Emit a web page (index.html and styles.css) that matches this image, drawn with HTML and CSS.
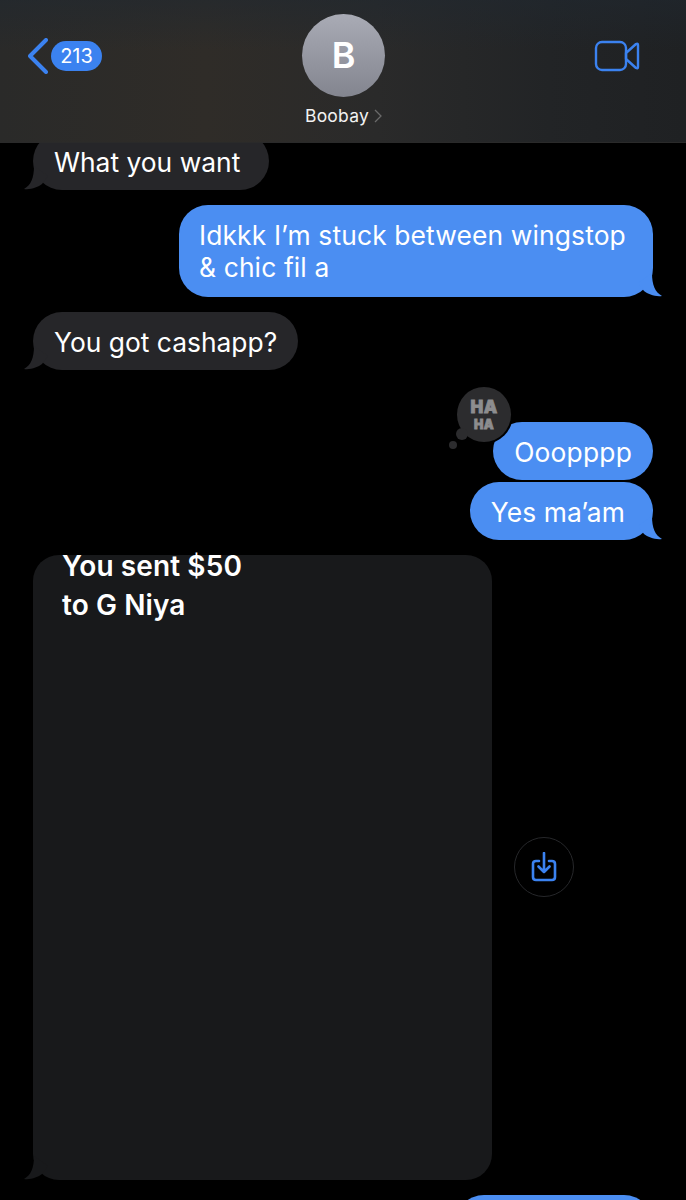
FILE: index.html
```html
<!DOCTYPE html>
<html lang="en">
<head>
    <meta charset="UTF-8">
    <meta name="viewport" content="width=device-width, initial-scale=1.0">
    <title>Boobay</title>
    <link rel="stylesheet" href="styles.css">
</head>
<body>
    <div class="screen">
        <header class="topbar">
            <div class="back">
                <svg class="back-icon" width="20" height="36" viewBox="0 0 20 36">
                    <path d="M18 2 L2 18 L18 34" fill="none" stroke="#3b82f0" stroke-width="4" stroke-linecap="round" stroke-linejoin="round"/>
                </svg>
                <span class="badge">213</span>
            </div>
            <div class="contact">
                <div class="avatar">B</div>
                <div class="name">Boobay
                    <svg width="8" height="14" viewBox="0 0 8 14">
                        <path d="M1 1 L7 7 L1 13" fill="none" stroke="#6a6a6a" stroke-width="1.3"/>
                    </svg>
                </div>
            </div>
            <div class="actions">
                <svg class="video" width="46" height="32" viewBox="0 0 46 32">
                    <rect x="2" y="2" width="30" height="28" rx="6" fill="none" stroke="#3b82f0" stroke-width="2.4"/>
                    <path d="M32 13 L42 4 Q44 3 44 5 V27 Q44 29 42 28 L32 19 Z" fill="none" stroke="#3b82f0" stroke-width="2.4" stroke-linejoin="round"/>
                </svg>
            </div>
        </header>

        <main class="thread">
            <div class="bubble in first">What you want
                <svg class="tail tail-in" width="24" height="24" viewBox="0 0 24 24"><path d="M10 0 C10 12 7 19 0 23 C7 24 14 21 18 18 L24 10 Z" fill="#262629"/></svg>
            </div>
            <div class="bubble out wide">Idkkk I’m stuck between wingstop<br>&amp; chic fil a
                <svg class="tail tail-out" width="24" height="24" viewBox="0 0 24 24"><path d="M14 0 C14 12 17 19 24 23 C17 24 10 21 6 18 L0 10 Z" fill="#4b8ef2"/></svg>
            </div>
            <div class="bubble in">You got cashapp?
                <svg class="tail tail-in" width="24" height="24" viewBox="0 0 24 24"><path d="M10 0 C10 12 7 19 0 23 C7 24 14 21 18 18 L24 10 Z" fill="#262629"/></svg>
            </div>
            <div class="bubble out reacted">Ooopppp
                <div class="reaction">
                    <span class="dot dot-big"></span>
                    <span class="dot dot-small"></span>
                    <span class="haha haha-top">HA</span>
                    <span class="haha haha-bottom">HA</span>
                </div>
            </div>
            <div class="bubble out joined">Yes ma’am
                <svg class="tail tail-out" width="24" height="24" viewBox="0 0 24 24"><path d="M14 0 C14 12 17 19 24 23 C17 24 10 21 6 18 L0 10 Z" fill="#4b8ef2"/></svg>
            </div>
            <div class="photo-row">
                <div class="photo">
                    <p class="photo-text">You sent $50<br>to G Niya</p>
                    <svg class="tail tail-in" width="24" height="24" viewBox="0 0 24 24"><path d="M10 0 C10 12 7 19 0 23 C7 24 14 21 18 18 L24 10 Z" fill="#18191b"/></svg>
                </div>
                <div class="save">
                    <svg width="26" height="30" viewBox="0 0 26 30">
                        <path d="M8 9 H5 Q2 9 2 12 V25 Q2 28 5 28 H21 Q24 28 24 25 V12 Q24 9 21 9 H18" fill="none" stroke="#3b82f0" stroke-width="2.6" stroke-linecap="round"/>
                        <path d="M13 1 V20 M7.5 14.5 L13 20 L18.5 14.5" fill="none" stroke="#3b82f0" stroke-width="2.6" stroke-linecap="round" stroke-linejoin="round"/>
                    </svg>
                </div>
            </div>
            <div class="bubble out last"></div>
        </main>
    </div>
</body>
</html>
```

FILE: styles.css
```css
html, body {
    margin: 0;
    background: #000;
}
.screen {
    height: 1200px;
    overflow: hidden;
    font-family: Inter, "Liberation Sans", sans-serif;
    color: #fff;
}
.topbar {
    position: relative;
    z-index: 2;
    height: 143px;
    box-sizing: border-box;
    padding: 14px 46px 0 28px;
    display: grid;
    grid-template-columns: 1fr auto 1fr;
    align-items: start;
    background:
        linear-gradient(180deg, rgba(32, 40, 48, 0.55) 0%, rgba(32, 40, 48, 0) 35%),
        linear-gradient(90deg, #2a2a29 0%, #2f2c28 30%, #2a2a2a 55%, #222426 80%, #1f2123 100%);
    border-bottom: 1px solid #2a2a2a;
}
.back {
    display: flex;
    align-items: center;
    gap: 3px;
    margin-top: 24px;
}
.back-icon {
    display: block;
}
.badge {
    width: 51px;
    height: 30px;
    line-height: 30px;
    border-radius: 15px;
    background: #3b82f0;
    font-size: 20px;
    text-align: center;
}
.contact {
    display: flex;
    flex-direction: column;
    align-items: center;
    margin-left: 19px;
}
.avatar {
    width: 83px;
    height: 83px;
    line-height: 83px;
    border-radius: 50%;
    background: linear-gradient(180deg, #a9abb5 0%, #83858f 100%);
    font-size: 36px;
    font-weight: 600;
    text-align: center;
}
.name {
    margin-top: 9px;
    font-size: 17.5px;
    line-height: 20px;
    letter-spacing: 0.2px;
    display: flex;
    align-items: center;
    gap: 5px;
    color: #f2f2f2;
}
.actions {
    display: flex;
    justify-content: flex-end;
}
.video {
    margin-top: 26px;
}
.thread {
    margin-top: -11px;
    padding: 0 33px;
    display: flex;
    flex-direction: column;
    align-items: flex-start;
}
.bubble {
    position: relative;
    box-sizing: border-box;
    min-height: 58px;
    padding: 14px 21px 12px;
    border-radius: 29px;
    font-size: 26.4px;
    line-height: 32px;
    margin-top: 15px;
}
.first {
    margin-top: 0;
    padding-right: 29px;
}
.in {
    background: #262629;
}
.out {
    background: #4b8ef2;
    align-self: flex-end;
}
.wide {
    width: 474px;
    padding: 14px 0 14px 20px;
    white-space: nowrap;
    letter-spacing: 0.13px;
}
.reacted {
    margin-top: 52px;
    letter-spacing: 0.2px;
}
.joined {
    margin-top: 2px;
    padding-right: 28px;
    letter-spacing: 0.1px;
}
.last {
    width: 198px;
}
.tail {
    position: absolute;
    bottom: 0;
}
.tail-in {
    left: -9px;
}
.tail-out {
    right: -9px;
}
.reaction {
    position: absolute;
    left: -36px;
    top: -35px;
    width: 54px;
    height: 55px;
    border-radius: 50%;
    background: #2c2c2e;
    box-shadow: 0 0 0 2px #000;
}
.dot {
    position: absolute;
    border-radius: 50%;
    background: #2c2c2e;
}
.dot-big {
    left: -1px;
    top: 41px;
    width: 12px;
    height: 12px;
}
.dot-small {
    left: -8px;
    top: 54px;
    width: 8px;
    height: 8px;
}
.haha {
    display: block;
    text-align: center;
    font-weight: 900;
    letter-spacing: 0.5px;
    color: #8d8d8f;
    -webkit-text-stroke: 0.8px #8d8d8f;
}
.haha-top {
    margin-top: 12px;
    font-size: 17px;
    line-height: 16px;
}
.haha-bottom {
    margin-top: 4px;
    font-size: 12.5px;
    line-height: 12px;
}
.photo-row {
    display: flex;
    align-items: center;
    gap: 22px;
    margin-top: 15px;
}
.photo {
    position: relative;
    width: 459px;
    height: 625px;
    border-radius: 26px;
    background: #18191b;
}
.photo-text {
    margin: 0;
    padding: 0 0 0 29px;
    position: relative;
    top: -8px;
    font-size: 28px;
    line-height: 39px;
    font-weight: 600;
    letter-spacing: 0.1px;
}
.save {
    width: 58px;
    height: 58px;
    margin-bottom: 2px;
    border: 1px solid #26272a;
    border-radius: 50%;
    display: flex;
    align-items: center;
    justify-content: center;
}
```
